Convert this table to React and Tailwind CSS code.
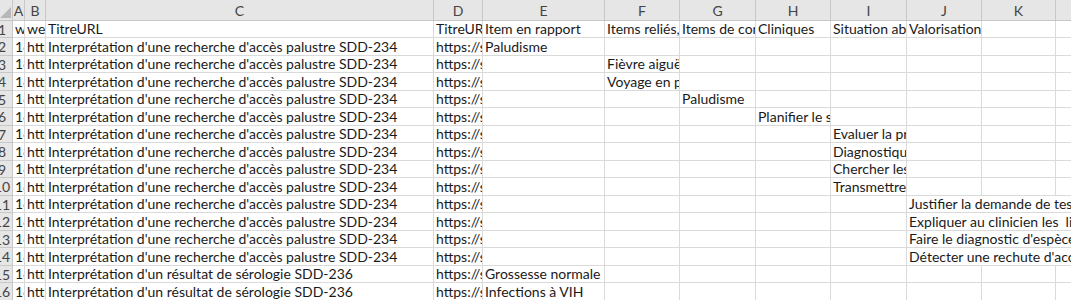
import React from "react";

const COLS = [
  { l: "A", w: 12 },
  { l: "B", w: 21 },
  { l: "C", w: 388 },
  { l: "D", w: 49 },
  { l: "E", w: 122 },
  { l: "F", w: 75 },
  { l: "G", w: 76 },
  { l: "H", w: 75 },
  { l: "I", w: 76 },
  { l: "J", w: 75 },
  { l: "K", w: 74 },
  { l: "L", w: 80 },
];

const T1 = "Interprétation d'une recherche d'accès palustre SDD-234";
const T2 = "Interprétation d'un résultat de sérologie SDD-236";
const URL = "https://sdd.uness.fr/";

const base = (title) => ({ 0: "1672", 1: "https://uness.fr", 2: title, 3: URL });

const ROWS = [
  { 0: "w", 1: "web", 2: "TitreURL", 3: "TitreURL", 4: "Item en rapport", 5: "Items reliés, inclus", 6: "Items de conduite", 7: "Cliniques", 8: "Situation abcd", 9: "Valorisation" },
  { ...base(T1), 4: "Paludisme" },
  { ...base(T1), 5: "Fièvre aiguë chez", 6: "" },
  { ...base(T1), 5: "Voyage en pays", 6: "" },
  { ...base(T1), 6: "Paludisme" },
  { ...base(T1), 7: "Planifier le suivi", 8: "" },
  { ...base(T1), 8: "Evaluer la probabilité", 9: "" },
  { ...base(T1), 8: "Diagnostiquer", 9: "" },
  { ...base(T1), 8: "Chercher les signes", 9: "" },
  { ...base(T1), 8: "Transmettre/alerter", 9: "" },
  { ...base(T1), 9: { t: "Justifier la demande de tests", span: 3 } },
  { ...base(T1), 9: { t: "Expliquer au clinicien les  limites du test", span: 3 } },
  { ...base(T1), 9: { t: "Faire le diagnostic d'espèce, de parasitémie", span: 3 } },
  { ...base(T1), 9: { t: "Détecter une rechute d'accès palustre", span: 3 } },
  { ...base(T2), 4: "Grossesse normale" },
  { ...base(T2), 4: "Infections à VIH" },
];

function Row({ data, idx }) {
  const h = idx % 2 === 0 ? "h-[17px]" : "h-[18px]";
  const cells = [];
  let c = 0;
  while (c < COLS.length) {
    const v = data[c];
    let text = "";
    let span = 1;
    if (v && typeof v === "object") {
      text = v.t;
      span = v.span;
    } else if (typeof v === "string") {
      text = v;
    }
    let w = 0;
    for (let k = c; k < Math.min(c + span, COLS.length); k++) w += COLS[k].w;
    cells.push(
      <div
        key={c}
        className="shrink-0 border-r border-b border-[#dadada] overflow-hidden whitespace-pre pl-[2px] flex items-end leading-[17px]"
        style={{ width: w }}
      >
        {text}
      </div>
    );
    c += span;
  }
  return (
    <div className={`flex ${h}`}>
      <div className="shrink-0 w-[13px] overflow-hidden bg-[#e6e6e6] border-r border-b border-[#c8c8c8] relative">
        <div className="absolute right-0 top-0 bottom-0 w-[20px] flex items-center justify-center text-[#444]">
          {idx + 1}
        </div>
      </div>
      {cells}
    </div>
  );
}

export default function App() {
  return (
    <div
      className="w-[1071px] h-[300px] overflow-hidden bg-white text-[14px] text-[#1a1a1a]"
      style={{ fontFamily: "Lato, 'Liberation Sans', sans-serif" }}
    >
      <div className="flex h-[21px] bg-[#e6e6e6] border-b border-[#c6c6c6]">
        <div className="shrink-0 w-[13px] border-r border-[#c8c8c8] relative">
          <svg className="absolute left-0 bottom-[2px]" width="11" height="11" viewBox="0 0 11 11">
            <polygon points="11,0 11,11 0,11" fill="#b7b7b7" />
          </svg>
        </div>
        {COLS.map((col) => (
          <div
            key={col.l}
            className="shrink-0 border-r border-[#c8c8c8] flex items-center justify-center text-[#444] overflow-hidden"
            style={{ width: col.w }}
          >
            {col.l}
          </div>
        ))}
      </div>
      {ROWS.map((r, i) => (
        <Row key={i} data={r} idx={i} />
      ))}
    </div>
  );
}
